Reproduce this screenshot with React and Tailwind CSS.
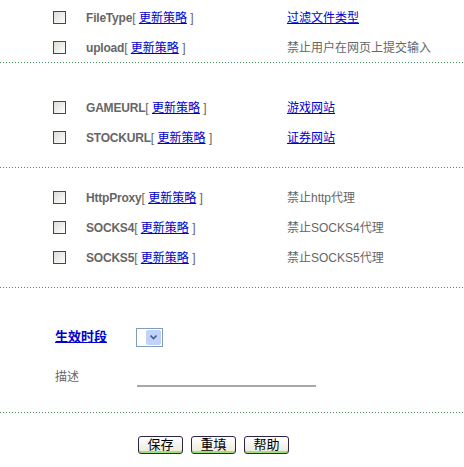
import React from "react";

const FONT = { fontFamily: '"Liberation Sans", Arial, "Noto Sans CJK SC", sans-serif' };

const sections = [
  [
    { name: "FileType", desc: "过滤文件类型", link: true },
    { name: "upload", desc: "禁止用户在网页上提交输入" },
  ],
  [
    { name: "GAMEURL", desc: "游戏网站", link: true },
    { name: "STOCKURL", desc: "证券网站", link: true },
  ],
  [
    { name: "HttpProxy", desc: "禁止http代理" },
    { name: "SOCKS4", desc: "禁止SOCKS4代理" },
    { name: "SOCKS5", desc: "禁止SOCKS5代理" },
  ],
];

const Dotted = () => (
  <div className="h-px w-full bg-[linear-gradient(to_right,#3f8f5f_1px,transparent_1px)] bg-[length:3px_1px]" />
);

const Checkbox = () => (
  <span className="block h-[13px] w-[13px] shrink-0 border border-[#1c5180] bg-gradient-to-br from-[#dcdcd7] to-white" />
);

const Row = ({ r }) => (
  <div className="flex h-[30px] items-center text-[12px] text-[#666]">
    <div className="w-[53px] shrink-0" />
    <Checkbox />
    <div className="ml-[20px] w-[201px] shrink-0 whitespace-nowrap pt-px">
      <span className="font-bold tracking-[-0.2px]">{r.name}</span>[ <a href="#" className="text-[#0000cc] underline">更新策略</a> ]
    </div>
    <div className="whitespace-nowrap pt-px">
      {r.link ? <a href="#" className="text-[#0000cc] underline">{r.desc}</a> : r.desc}
    </div>
  </div>
);

const Btn = ({ children }) => (
  <button className="h-[18px] w-[45px] rounded-[3px] border border-[#2e2447] bg-gradient-to-b from-white to-[#ece9d8] text-[13px] leading-[14px] text-black shadow-[inset_0_-2px_0_#a3e07d]">
    {children}
  </button>
);

export default function App() {
  return (
    <div className="h-[467px] w-[464px] overflow-hidden bg-white" style={FONT}>
      <div className="h-[2px]" />
      {sections[0].map((r) => <Row key={r.name} r={r} />)}
      <Dotted />
      <div className="h-[29px]" />
      {sections[1].map((r) => <Row key={r.name} r={r} />)}
      <div className="h-[15px]" />
      <Dotted />
      <div className="h-[14px]" />
      {sections[2].map((r) => <Row key={r.name} r={r} />)}
      <div className="h-[15px]" />
      <Dotted />

      <div className="h-[34px]" />
      <div className="flex h-[30px] items-center">
        <div className="w-[55px] shrink-0" />
        <a href="#" className="w-[81px] shrink-0 text-[13px] font-bold text-[#0000cc] underline">生效时段</a>
        <div className="flex h-[19px] w-[27px] items-center justify-end border border-[#7f9db9] bg-white pr-px">
          <div className="flex h-[15px] w-[15px] items-center justify-center rounded-[2px] bg-[#c1d3fb]">
            <svg width="7" height="5" viewBox="0 0 7 5">
              <path d="M0.5 0.5 L3.5 3.5 L6.5 0.5" fill="none" stroke="#4d6185" strokeWidth="1.6" />
            </svg>
          </div>
        </div>
      </div>
      <div className="h-[10px]" />
      <div className="flex h-[30px] items-center">
        <div className="w-[55px] shrink-0" />
        <span className="w-[82px] shrink-0 text-[12px] text-[#666]">描述</span>
        <div className="h-[20px] w-[179px] border-b-2 border-[#a8a8a8]" />
      </div>
      <div className="h-[20px]" />
      <Dotted />
      <div className="h-[23px]" />
      <div className="flex gap-[8px] pl-[138px]">
        <Btn>保存</Btn>
        <Btn>重填</Btn>
        <Btn>帮助</Btn>
      </div>
    </div>
  );
}
